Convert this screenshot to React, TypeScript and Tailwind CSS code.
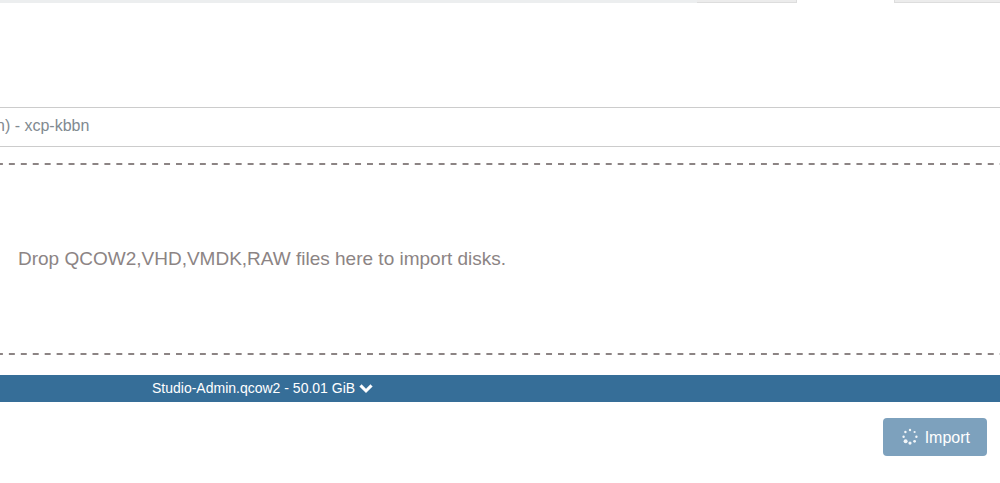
import { useState } from "react";

const dots = [
  { x: 10, y: 3, r: 1.2 },
  { x: 14.6, y: 5, r: 1.1 },
  { x: 16.4, y: 9.7, r: 1.2 },
  { x: 14.6, y: 14.3, r: 1.4 },
  { x: 10, y: 16.1, r: 1.6 },
  { x: 5.6, y: 14.2, r: 2 },
  { x: 3.6, y: 9.7, r: 1.2 },
  { x: 5.4, y: 5, r: 1.2 },
];

function Spinner() {
  return (
    <svg width="20" height="20" viewBox="0 1 20 20" fill="currentColor" fillOpacity=".9" aria-hidden="true">
      {dots.map((d, i) => (
        <circle key={i} cx={d.x} cy={d.y} r={d.r} />
      ))}
    </svg>
  );
}

function Chevron({ open }: { open: boolean }) {
  return (
    <svg
      width="14"
      height="14"
      viewBox="0 0 14 14"
      className={open ? "rotate-180" : ""}
      fill="currentColor"
      aria-hidden="true"
    >
      <path d="M7 11.8 .6 5.5 2.6 3.5 7 7.9 11.4 3.5 13.4 5.5Z" stroke="currentColor" strokeWidth=".4" strokeLinejoin="round" />
    </svg>
  );
}

export default function App() {
  const [open, setOpen] = useState(false);

  return (
    <div className="overflow-x-hidden bg-white font-['Liberation_Sans',Arial,sans-serif] text-base">
      {/* Bottom edge of the tab strip */}
      <nav className="flex h-[3px]">
        <div className="flex-1 bg-[#eceeef]" />
        <div className="w-[100px] border-r border-b border-[#dddddd] bg-[#ececec]" />
        <div className="w-[97px]" />
        <div className="w-[106px] border-b border-l border-[#dddddd] bg-[#ececec]" />
      </nav>

      <main>
        <button type="button" className="mt-[104px] flex h-10 w-full items-center border-y border-[#cccccc] pb-[3px] text-[#818a91]">
          <span className="-ml-1">n) - xcp-kbbn</span>
        </button>

        {/* Drop zone, its left and right edges are outside the page */}
        <div className="mt-4 -ml-[15px] flex h-48 items-center bg-[linear-gradient(to_right,#8c8484_50%,transparent_50%),linear-gradient(to_right,#8c8484_50%,transparent_50%)] bg-[length:12px_2px] bg-[position:left_top,left_bottom] [background-repeat:round_no-repeat]">
          <p className="ml-[33px] text-[19px] text-[#8c8484]">Drop QCOW2,VHD,VMDK,RAW files here to import disks.</p>
        </div>

        <button
          type="button"
          aria-expanded={open}
          onClick={() => setOpen(!open)}
          className="mt-5 flex h-[27px] w-full items-center gap-1 bg-[#366e98] pb-0.5 pl-[152px] text-sm text-white"
        >
          Studio-Admin.qcow2 - 50.01 GiB
          <Chevron open={open} />
        </button>

        <div className="flex justify-end px-[13px] py-4">
          <button type="button" disabled className="flex h-[38px] items-center gap-[5px] rounded bg-[#7da1bd] px-[17px] pt-0.5 text-white">
            <Spinner />
            Import
          </button>
        </div>
      </main>
    </div>
  );
}
